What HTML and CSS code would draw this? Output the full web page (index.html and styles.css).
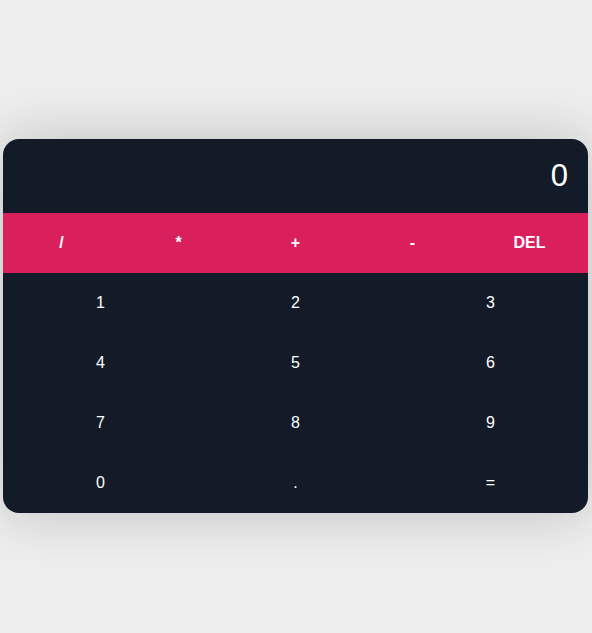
FILE: index.html
```html
<!DOCTYPE html>
<html>
<head>
<meta charset="utf-8">
<link rel="stylesheet" href="styles.css">
</head>
<body>
<div class="calc">
  <div class="display">0</div>
  <div class="ops">
    <div class="op">/</div>
    <div class="op">*</div>
    <div class="op">+</div>
    <div class="op">-</div>
    <div class="op">DEL</div>
  </div>
  <div class="keys">
    <div class="key">1</div>
    <div class="key">2</div>
    <div class="key">3</div>
    <div class="key">4</div>
    <div class="key">5</div>
    <div class="key">6</div>
    <div class="key">7</div>
    <div class="key">8</div>
    <div class="key">9</div>
    <div class="key">0</div>
    <div class="key">.</div>
    <div class="key">=</div>
  </div>
</div>
</body>
</html>
```
FILE: styles.css
```css
html, body {
  margin: 0;
  padding: 0;
  background: #eeeeee;
  font-family: "Liberation Sans", Arial, sans-serif;
}
body {
  padding-top: 139px;
  height: 633px;
  box-sizing: border-box;
}
.calc {
  width: 585px;
  margin: 0 auto 0 3px;
  background: #131a28;
  border-radius: 16px;
  overflow: hidden;
  box-shadow: 0 0 60px rgba(0, 0, 0, 0.2);
  color: #ffffff;
}
.display {
  height: 74px;
  display: flex;
  align-items: center;
  justify-content: flex-end;
  padding-right: 20px;
  font-size: 31px;
  font-weight: 300;
}
.ops {
  height: 60px;
  background: #d91f5c;
  display: grid;
  grid-template-columns: repeat(5, 1fr);
}
.op {
  display: flex;
  align-items: center;
  justify-content: center;
  font-size: 16px;
  font-weight: bold;
}
.keys {
  display: grid;
  grid-template-columns: repeat(3, 1fr);
  grid-auto-rows: 60px;
}
.key {
  display: flex;
  align-items: center;
  justify-content: center;
  font-size: 16px;
}
```
